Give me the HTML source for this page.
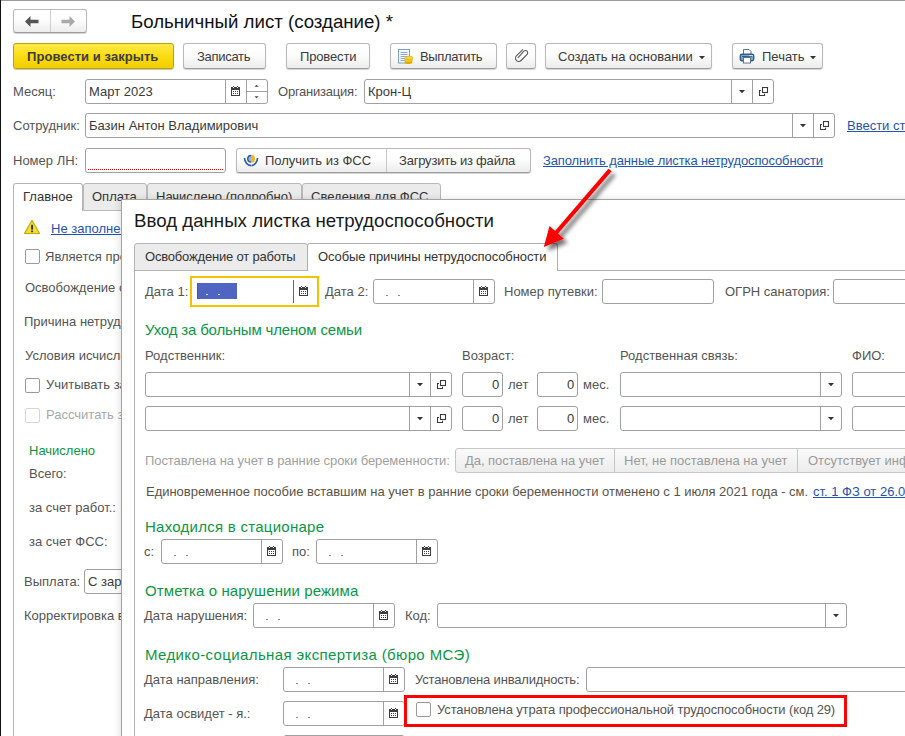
<!DOCTYPE html>
<html><head><meta charset="utf-8"><style>
html,body{margin:0;padding:0;width:905px;height:736px;overflow:hidden;background:#fff;}
body{position:relative;font-family:"Liberation Sans", sans-serif;}
.a{position:absolute;}
.t{position:absolute;white-space:nowrap;font-family:"Liberation Sans", sans-serif;}
</style></head><body>
<div class="a" style="left:0px;top:0px;width:905px;height:1px;background:#9a9a9a;"></div>
<div class="a" style="left:0px;top:0px;width:1px;height:736px;background:#111;"></div>
<div class="a" style="left:13px;top:9px;width:74px;height:24px;border:1px solid #b9b9b9;border-bottom-color:#9c9c9c;border-radius:3px;background:linear-gradient(#ffffff,#fdfdfd 45%,#ececec);box-shadow:0 1px 1px rgba(0,0,0,0.18);box-sizing:border-box;"></div>
<div class="a" style="left:50px;top:10px;width:1px;height:22px;background:#cfcfcf;"></div>
<svg class="a" style="left:24px;top:15px" width="16" height="13" viewBox="0 0 16 13"><path d="M1 6.5L6.5 1V4.8H14.5V8.2H6.5V12Z" fill="#555"/></svg>
<svg class="a" style="left:60px;top:15px" width="16" height="13" viewBox="0 0 16 13"><path d="M15 6.5L9.5 1V4.8H1.5V8.2H9.5V12Z" fill="#aaa"/></svg>
<div class="t" style="left:131px;top:11px;font-size:18.67px;line-height:21px;color:#111;">Больничный лист (создание) *</div>
<div class="a" style="left:13px;top:43px;width:161px;height:26px;border:1px solid #bca400;border-radius:3px;background:linear-gradient(#ffe94a,#fbdc12 50%,#f0cf00);box-shadow:0 1px 1px rgba(0,0,0,0.25);box-sizing:border-box;"></div>
<div class="t" style="left:27px;top:49px;font-size:13px;line-height:15px;color:#3c3c3c;font-weight:bold;letter-spacing:0.059px;">Провести и закрыть</div>
<div class="a" style="left:183px;top:43px;width:83px;height:26px;border:1px solid #b9b9b9;border-bottom-color:#9c9c9c;border-radius:3px;background:linear-gradient(#ffffff,#fdfdfd 45%,#ececec);box-shadow:0 1px 1px rgba(0,0,0,0.18);box-sizing:border-box;"></div>
<div class="t" style="left:197px;top:49px;font-size:13px;line-height:15px;color:#3a3a3a;letter-spacing:-0.286px;">Записать</div>
<div class="a" style="left:286px;top:43px;width:84px;height:26px;border:1px solid #b9b9b9;border-bottom-color:#9c9c9c;border-radius:3px;background:linear-gradient(#ffffff,#fdfdfd 45%,#ececec);box-shadow:0 1px 1px rgba(0,0,0,0.18);box-sizing:border-box;"></div>
<div class="t" style="left:300px;top:49px;font-size:13px;line-height:15px;color:#3a3a3a;letter-spacing:-0.143px;">Провести</div>
<div class="a" style="left:390px;top:43px;width:107px;height:26px;border:1px solid #b9b9b9;border-bottom-color:#9c9c9c;border-radius:3px;background:linear-gradient(#ffffff,#fdfdfd 45%,#ececec);box-shadow:0 1px 1px rgba(0,0,0,0.18);box-sizing:border-box;"></div>
<svg class="a" style="left:397px;top:48px" width="17" height="17" viewBox="0 0 17 17"><rect x="1.5" y="1.5" width="11" height="13.5" fill="#f4f8fc" stroke="#7f9fbf" stroke-width="1"/><path d="M3.5 4.5H10.5M3.5 6.5H10.5M3.5 8.5H10.5M3.5 10.5H8M3.5 12.5H8" stroke="#8fa8c0" stroke-width="1"/><ellipse cx="11.5" cy="14.2" rx="4" ry="1.8" fill="#e0b000"/><ellipse cx="11.5" cy="12.2" rx="4" ry="1.8" fill="#f3cc20" stroke="#d4a800" stroke-width="0.6"/><ellipse cx="12.2" cy="9.8" rx="3.8" ry="1.7" fill="#f7da40" stroke="#d4a800" stroke-width="0.6"/></svg>
<div class="t" style="left:420px;top:49px;font-size:13px;line-height:15px;color:#3a3a3a;letter-spacing:-0.375px;">Выплатить</div>
<div class="a" style="left:506px;top:43px;width:30px;height:26px;border:1px solid #b9b9b9;border-bottom-color:#9c9c9c;border-radius:3px;background:linear-gradient(#ffffff,#fdfdfd 45%,#ececec);box-shadow:0 1px 1px rgba(0,0,0,0.18);box-sizing:border-box;"></div>
<svg class="a" style="left:513px;top:47px" width="16" height="17" viewBox="0 0 16 17"><path d="M10 2.3L3.6 8.7C2.2 10.1 2.3 12.4 3.5 13.6C4.7 14.8 6.8 14.8 8.1 13.5L13.9 7.7C14.9 6.7 14.9 5.1 14 4.2C13.1 3.3 11.6 3.3 10.6 4.3L4.9 10.8" fill="none" stroke="#5a5a5a" stroke-width="1.15"/></svg>
<div class="a" style="left:545px;top:43px;width:167px;height:26px;border:1px solid #b9b9b9;border-bottom-color:#9c9c9c;border-radius:3px;background:linear-gradient(#ffffff,#fdfdfd 45%,#ececec);box-shadow:0 1px 1px rgba(0,0,0,0.18);box-sizing:border-box;"></div>
<div class="t" style="left:558px;top:49px;font-size:13px;line-height:15px;color:#3a3a3a;">Создать на основании</div>
<svg class="a" style="left:699px;top:56px" width="6" height="4" viewBox="0 0 6 4"><path d="M0 0H6L3 3.2Z" fill="#333"/></svg>
<div class="a" style="left:732px;top:43px;width:91px;height:26px;border:1px solid #b9b9b9;border-bottom-color:#9c9c9c;border-radius:3px;background:linear-gradient(#ffffff,#fdfdfd 45%,#ececec);box-shadow:0 1px 1px rgba(0,0,0,0.18);box-sizing:border-box;"></div>
<svg class="a" style="left:739px;top:48px" width="16" height="16" viewBox="0 0 16 16"><path d="M4.5 1.5H10L12 3.5V6.5H4.5Z" fill="#fff" stroke="#5a7390" stroke-width="1"/><rect x="1.3" y="6.3" width="13.4" height="6.4" rx="1.6" fill="#7ea3cc" stroke="#2f5f92" stroke-width="1.4"/><path d="M3 8.5H13" stroke="#3a5a80" stroke-width="1"/><rect x="4.5" y="9.5" width="7" height="5.5" fill="#fff" stroke="#5a7390" stroke-width="1"/><rect x="10.5" y="7" width="1.2" height="1.2" fill="#fff"/><rect x="12.3" y="7" width="1.2" height="1.2" fill="#fff"/></svg>
<div class="t" style="left:762px;top:49px;font-size:13px;line-height:15px;color:#3a3a3a;">Печать</div>
<svg class="a" style="left:810px;top:56px" width="6" height="4" viewBox="0 0 6 4"><path d="M0 0H6L3 3.2Z" fill="#333"/></svg>
<div class="t" style="left:13px;top:84px;font-size:13px;line-height:15px;color:#545454;">Месяц:</div>
<div class="a" style="left:85px;top:79px;width:183px;height:25px;border:1px solid #a0a0a0;border-radius:3px;background:#fff;box-sizing:border-box;"></div>
<div class="a" style="left:225px;top:80px;width:1px;height:23px;background:#a0a0a0;"></div>
<div class="a" style="left:246px;top:80px;width:1px;height:23px;background:#a0a0a0;"></div>
<div class="a" style="left:247px;top:91px;width:20px;height:1px;background:#a5a5a5;"></div>
<svg class="a" style="left:254px;top:84px" width="6" height="4" viewBox="0 0 6 4"><path d="M0.5 2.8H4.5L2.5 0.8Z" fill="#444"/></svg>
<svg class="a" style="left:254px;top:96px" width="6" height="4" viewBox="0 0 6 4"><path d="M0.5 0.2H4.5L2.5 2.2Z" fill="#444"/></svg>
<svg class="a" style="left:231px;top:86px" width="9" height="10" viewBox="0 0 9 10" shape-rendering="crispEdges"><rect x="0" y="1" width="9" height="9" rx="1" fill="#3d3d3d"/><rect x="1" y="4" width="7" height="5" fill="#fff"/><rect x="2" y="0" width="1" height="1" fill="#3d3d3d"/><rect x="6" y="0" width="1" height="1" fill="#3d3d3d"/><rect x="2" y="1" width="1" height="1" fill="#fff"/><rect x="6" y="1" width="1" height="1" fill="#fff"/><rect x="2" y="5" width="1" height="1" fill="#3d3d3d"/><rect x="4" y="5" width="1" height="1" fill="#3d3d3d"/><rect x="6" y="5" width="1" height="1" fill="#3d3d3d"/><rect x="2" y="7" width="1" height="1" fill="#3d3d3d"/><rect x="4" y="7" width="1" height="1" fill="#3d3d3d"/><rect x="6" y="7" width="1" height="1" fill="#3d3d3d"/></svg>
<div class="t" style="left:89px;top:84px;font-size:13px;line-height:15px;color:#3a3a3a;">Март 2023</div>
<div class="t" style="left:278px;top:84px;font-size:13px;line-height:15px;color:#545454;letter-spacing:-0.227px;">Организация:</div>
<div class="a" style="left:364px;top:79px;width:410px;height:25px;border:1px solid #a0a0a0;border-radius:3px;background:#fff;box-sizing:border-box;"></div>
<div class="a" style="left:731px;top:80px;width:1px;height:23px;background:#a0a0a0;"></div>
<div class="a" style="left:752px;top:80px;width:1px;height:23px;background:#a0a0a0;"></div>
<svg class="a" style="left:739px;top:90px" width="6" height="4" viewBox="0 0 6 4"><path d="M0 0H6L3 3.2Z" fill="#333"/></svg>
<svg class="a" style="left:759px;top:87px" width="10" height="10" viewBox="0 0 10 10"><rect x="3.5" y="0.5" width="5" height="5" fill="none" stroke="#3a3a3a" stroke-width="1.1"/><path d="M2 3.5H0.5V8.5H5.5V6.8" fill="none" stroke="#3a3a3a" stroke-width="1.1"/></svg>
<div class="t" style="left:368px;top:84px;font-size:13px;line-height:15px;color:#3a3a3a;">Крон-Ц</div>
<div class="t" style="left:13px;top:118px;font-size:13px;line-height:15px;color:#545454;">Сотрудник:</div>
<div class="a" style="left:85px;top:113px;width:750px;height:25px;border:1px solid #a0a0a0;border-radius:3px;background:#fff;box-sizing:border-box;"></div>
<div class="a" style="left:792px;top:114px;width:1px;height:23px;background:#a0a0a0;"></div>
<div class="a" style="left:813px;top:114px;width:1px;height:23px;background:#a0a0a0;"></div>
<svg class="a" style="left:800px;top:124px" width="6" height="4" viewBox="0 0 6 4"><path d="M0 0H6L3 3.2Z" fill="#333"/></svg>
<svg class="a" style="left:820px;top:121px" width="10" height="10" viewBox="0 0 10 10"><rect x="3.5" y="0.5" width="5" height="5" fill="none" stroke="#3a3a3a" stroke-width="1.1"/><path d="M2 3.5H0.5V8.5H5.5V6.8" fill="none" stroke="#3a3a3a" stroke-width="1.1"/></svg>
<div class="t" style="left:89px;top:118px;font-size:13px;line-height:15px;color:#3a3a3a;">Базин Антон Владимирович</div>
<div class="t" style="left:847px;top:118px;font-size:13px;line-height:15px;color:#1f54b0;text-decoration:underline;">Ввести старые данные</div>
<div class="t" style="left:13px;top:153px;font-size:13px;line-height:15px;color:#545454;">Номер ЛН:</div>
<div class="a" style="left:85px;top:148px;width:141px;height:25px;border:1px solid #a0a0a0;border-radius:3px;background:#fff;box-sizing:border-box;"></div>
<div class="a" style="left:88px;top:169px;width:135px;height:0;border-top:1px dotted #e00000"></div>
<div class="a" style="left:236px;top:148px;width:295px;height:25px;border:1px solid #b9b9b9;border-bottom-color:#9c9c9c;border-radius:3px;background:linear-gradient(#ffffff,#fdfdfd 45%,#ececec);box-shadow:0 1px 1px rgba(0,0,0,0.18);box-sizing:border-box;"></div>
<div class="a" style="left:386px;top:149px;width:1px;height:23px;background:#c8c8c8;"></div>
<svg class="a" style="left:243px;top:153px" width="16" height="14" viewBox="0 0 16 14"><path d="M1.5 5C1.5 9 4.5 12.3 8 12.6" fill="none" stroke="#2a5aa8" stroke-width="1.6"/><path d="M14.5 5C14.5 9 11.5 12.3 8.5 12.6" fill="none" stroke="#2a5aa8" stroke-width="1.6"/><path d="M8 1.8A4 4 0 0 0 8 9.8Z" fill="#2a5aa8"/><path d="M8 1.8A4 4 0 0 1 8 9.8Z" fill="#f6b31a"/><path d="M8 3.2A2.5 2.6 0 0 0 8 8.4Z" fill="#9ab8e0"/></svg>
<div class="t" style="left:265px;top:153px;font-size:13px;line-height:15px;color:#3a3a3a;letter-spacing:-0.007px;">Получить из ФСС</div>
<div class="t" style="left:399px;top:153px;font-size:13px;line-height:15px;color:#3a3a3a;letter-spacing:-0.206px;">Загрузить из файла</div>
<div class="t" style="left:543px;top:153px;font-size:13px;line-height:15px;color:#1f54b0;letter-spacing:-0.122px;text-decoration:underline;">Заполнить данные листка нетрудоспособности</div>
<div class="a" style="left:13px;top:183px;width:70px;height:28px;border:1px solid #b5b5b5;border-bottom:none;border-radius:3px 3px 0 0;background:#fff;box-sizing:border-box;"></div>
<div class="a" style="left:83px;top:183px;width:64px;height:28px;border:1px solid #b9b9b9;border-radius:3px 3px 0 0;background:#ebebeb;box-sizing:border-box;"></div>
<div class="a" style="left:147px;top:183px;width:155px;height:28px;border:1px solid #b9b9b9;border-radius:3px 3px 0 0;background:#ebebeb;box-sizing:border-box;"></div>
<div class="a" style="left:302px;top:183px;width:139px;height:28px;border:1px solid #b9b9b9;border-radius:3px 3px 0 0;background:#ebebeb;box-sizing:border-box;"></div>
<div class="a" style="left:441px;top:210px;width:464px;height:1px;background:#b5b5b5;"></div>
<div class="a" style="left:13px;top:210px;width:1px;height:526px;background:#b5b5b5;"></div>
<div class="t" style="left:23px;top:189px;font-size:13px;line-height:15px;color:#333;">Главное</div>
<div class="t" style="left:92px;top:189px;font-size:13px;line-height:15px;color:#333;">Оплата</div>
<div class="t" style="left:156px;top:189px;font-size:13px;line-height:15px;color:#333;">Начислено (подробно)</div>
<div class="t" style="left:311px;top:189px;font-size:13px;line-height:15px;color:#333;">Сведения для ФСС</div>
<svg class="a" style="left:23px;top:219px" width="18" height="16" viewBox="0 0 18 16"><path d="M9 1.3L16.6 14.5H1.4Z" fill="#f3dc3a" stroke="#c8a800" stroke-width="1.1" stroke-linejoin="round"/><rect x="8.2" y="5.8" width="1.7" height="4.8" fill="#222"/><rect x="8.2" y="11.6" width="1.7" height="1.6" fill="#222"/></svg>
<div class="t" style="left:51px;top:221px;font-size:13px;line-height:15px;color:#1f54b0;text-decoration:underline;">Не заполнены данные о стаже</div>
<div class="a" style="left:25px;top:249px;width:15px;height:15px;border:1px solid #9a9a9a;border-radius:2px;background:#fff;box-sizing:border-box;"></div>
<div class="t" style="left:45px;top:249px;font-size:13px;line-height:15px;color:#545454;">Является продолжением</div>
<div class="t" style="left:25px;top:280px;font-size:13px;line-height:15px;color:#545454;">Освобождение от работы</div>
<div class="t" style="left:24px;top:314px;font-size:13px;line-height:15px;color:#545454;">Причина нетрудоспособности</div>
<div class="t" style="left:25px;top:348px;font-size:13px;line-height:15px;color:#545454;">Условия исчисления</div>
<div class="a" style="left:25px;top:378px;width:15px;height:15px;border:1px solid #9a9a9a;border-radius:2px;background:#fff;box-sizing:border-box;"></div>
<div class="t" style="left:46px;top:377px;font-size:13px;line-height:15px;color:#545454;">Учитывать заработок</div>
<div class="a" style="left:25px;top:408px;width:15px;height:15px;border:1px solid #d6d6d6;border-radius:2px;background:#fff;box-sizing:border-box;"></div>
<div class="t" style="left:46px;top:407px;font-size:13px;line-height:15px;color:#a8a8a8;">Рассчитать за</div>
<div class="t" style="left:29px;top:443px;font-size:13px;line-height:15px;color:#0b9646;">Начислено</div>
<div class="t" style="left:29px;top:466px;font-size:13px;line-height:15px;color:#545454;">Всего:</div>
<div class="t" style="left:29px;top:500px;font-size:13px;line-height:15px;color:#545454;">за счет работ.:</div>
<div class="t" style="left:29px;top:534px;font-size:13px;line-height:15px;color:#545454;">за счет ФСС:</div>
<div class="t" style="left:24px;top:574px;font-size:13px;line-height:15px;color:#545454;">Выплата:</div>
<div class="a" style="left:84px;top:569px;width:317px;height:25px;border:1px solid #a0a0a0;border-radius:3px;background:#fff;box-sizing:border-box;"></div>
<div class="t" style="left:88px;top:574px;font-size:13px;line-height:15px;color:#3a3a3a;">С зарплатой</div>
<div class="t" style="left:24px;top:608px;font-size:13px;line-height:15px;color:#545454;">Корректировка выплаты</div>
<div class="a" style="left:121px;top:199px;width:800px;height:600px;background:#fff;border:1px solid #a2a2a2;box-sizing:border-box;box-shadow:-1px 0 7px rgba(0,0,0,0.13);"></div>
<div class="t" style="left:134px;top:210px;font-size:18.67px;line-height:21px;color:#1a1a1a;letter-spacing:0.014px;">Ввод данных листка нетрудоспособности</div>
<div class="a" style="left:134px;top:243px;width:174px;height:28px;border:1px solid #b5b5b5;border-radius:3px 3px 0 0;background:#ebebeb;box-sizing:border-box;"></div>
<div class="a" style="left:307px;top:243px;width:251px;height:28px;border:1px solid #b0b0b0;border-bottom:none;border-radius:3px 3px 0 0;background:#fff;box-sizing:border-box;"></div>
<div class="a" style="left:558px;top:270px;width:347px;height:1px;background:#b0b0b0;"></div>
<div class="a" style="left:134px;top:270px;width:1px;height:466px;background:#b0b0b0;"></div>
<div class="t" style="left:145px;top:249px;font-size:13px;line-height:15px;color:#333;letter-spacing:-0.186px;">Освобождение от работы</div>
<div class="t" style="left:318px;top:249px;font-size:13px;line-height:15px;color:#333;letter-spacing:-0.094px;">Особые причины нетрудоспособности</div>
<div class="t" style="left:145px;top:284px;font-size:13px;line-height:15px;color:#545454;">Дата 1:</div>
<div class="a" style="left:190px;top:276px;width:129px;height:31px;border:2px solid #f5c200;box-sizing:border-box;background:#fff;"></div>
<div class="a" style="left:197px;top:283px;width:40px;height:16px;background:#5065c2;"></div>
<div class="a" style="left:197px;top:283px;width:1px;height:16px;background:#6a5a20;"></div>
<div class="a" style="left:206px;top:294px;width:2px;height:1px;background:#dfe4ff"></div>
<div class="a" style="left:218px;top:294px;width:2px;height:1px;background:#dfe4ff"></div>
<div class="a" style="left:293px;top:280px;width:1px;height:23px;background:#666;"></div>
<svg class="a" style="left:299px;top:286px" width="9" height="10" viewBox="0 0 9 10" shape-rendering="crispEdges"><rect x="0" y="1" width="9" height="9" rx="1" fill="#3d3d3d"/><rect x="1" y="4" width="7" height="5" fill="#fff"/><rect x="2" y="0" width="1" height="1" fill="#3d3d3d"/><rect x="6" y="0" width="1" height="1" fill="#3d3d3d"/><rect x="2" y="1" width="1" height="1" fill="#fff"/><rect x="6" y="1" width="1" height="1" fill="#fff"/><rect x="2" y="5" width="1" height="1" fill="#3d3d3d"/><rect x="4" y="5" width="1" height="1" fill="#3d3d3d"/><rect x="6" y="5" width="1" height="1" fill="#3d3d3d"/><rect x="2" y="7" width="1" height="1" fill="#3d3d3d"/><rect x="4" y="7" width="1" height="1" fill="#3d3d3d"/><rect x="6" y="7" width="1" height="1" fill="#3d3d3d"/></svg>
<div class="t" style="left:325px;top:284px;font-size:13px;line-height:15px;color:#545454;">Дата 2:</div>
<div class="a" style="left:373px;top:279px;width:122px;height:25px;border:1px solid #a0a0a0;border-radius:3px;background:#fff;box-sizing:border-box;"></div>
<div class="a" style="left:473px;top:280px;width:1px;height:23px;background:#a0a0a0;"></div>
<svg class="a" style="left:479px;top:286px" width="9" height="10" viewBox="0 0 9 10" shape-rendering="crispEdges"><rect x="0" y="1" width="9" height="9" rx="1" fill="#3d3d3d"/><rect x="1" y="4" width="7" height="5" fill="#fff"/><rect x="2" y="0" width="1" height="1" fill="#3d3d3d"/><rect x="6" y="0" width="1" height="1" fill="#3d3d3d"/><rect x="2" y="1" width="1" height="1" fill="#fff"/><rect x="6" y="1" width="1" height="1" fill="#fff"/><rect x="2" y="5" width="1" height="1" fill="#3d3d3d"/><rect x="4" y="5" width="1" height="1" fill="#3d3d3d"/><rect x="6" y="5" width="1" height="1" fill="#3d3d3d"/><rect x="2" y="7" width="1" height="1" fill="#3d3d3d"/><rect x="4" y="7" width="1" height="1" fill="#3d3d3d"/><rect x="6" y="7" width="1" height="1" fill="#3d3d3d"/></svg>
<div class="a" style="left:386px;top:295px;width:2px;height:1px;background:#8c8c8c"></div>
<div class="a" style="left:398px;top:295px;width:2px;height:1px;background:#8c8c8c"></div>
<div class="t" style="left:504px;top:284px;font-size:13px;line-height:15px;color:#545454;">Номер путевки:</div>
<div class="a" style="left:602px;top:279px;width:112px;height:25px;border:1px solid #a0a0a0;border-radius:3px;background:#fff;box-sizing:border-box;"></div>
<div class="t" style="left:725px;top:284px;font-size:13px;line-height:15px;color:#545454;">ОГРН санатория:</div>
<div class="a" style="left:833px;top:279px;width:128px;height:25px;border:1px solid #a0a0a0;border-radius:3px;background:#fff;box-sizing:border-box;"></div>
<div class="t" style="left:145px;top:321px;font-size:15px;line-height:17px;color:#0b9646;letter-spacing:-0.167px;">Уход за больным членом семьи</div>
<div class="t" style="left:145px;top:348px;font-size:13px;line-height:15px;color:#545454;">Родственник:</div>
<div class="t" style="left:462px;top:348px;font-size:13px;line-height:15px;color:#545454;">Возраст:</div>
<div class="t" style="left:620px;top:348px;font-size:13px;line-height:15px;color:#545454;">Родственная связь:</div>
<div class="t" style="left:852px;top:348px;font-size:13px;line-height:15px;color:#545454;">ФИО:</div>
<div class="a" style="left:145px;top:372px;width:307px;height:25px;border:1px solid #a0a0a0;border-radius:3px;background:#fff;box-sizing:border-box;"></div>
<div class="a" style="left:409px;top:373px;width:1px;height:23px;background:#a0a0a0;"></div>
<div class="a" style="left:430px;top:373px;width:1px;height:23px;background:#a0a0a0;"></div>
<svg class="a" style="left:417px;top:383px" width="6" height="4" viewBox="0 0 6 4"><path d="M0 0H6L3 3.2Z" fill="#333"/></svg>
<svg class="a" style="left:437px;top:380px" width="10" height="10" viewBox="0 0 10 10"><rect x="3.5" y="0.5" width="5" height="5" fill="none" stroke="#3a3a3a" stroke-width="1.1"/><path d="M2 3.5H0.5V8.5H5.5V6.8" fill="none" stroke="#3a3a3a" stroke-width="1.1"/></svg>
<div class="a" style="left:462px;top:372px;width:41px;height:25px;border:1px solid #a0a0a0;border-radius:3px;background:#fff;box-sizing:border-box;"></div>
<div class="t" style="left:492px;top:377px;font-size:13px;line-height:15px;color:#3a3a3a;">0</div>
<div class="t" style="left:508px;top:377px;font-size:13px;line-height:15px;color:#545454;">лет</div>
<div class="a" style="left:537px;top:372px;width:41px;height:25px;border:1px solid #a0a0a0;border-radius:3px;background:#fff;box-sizing:border-box;"></div>
<div class="t" style="left:567px;top:377px;font-size:13px;line-height:15px;color:#3a3a3a;">0</div>
<div class="t" style="left:583px;top:377px;font-size:13px;line-height:15px;color:#545454;">мес.</div>
<div class="a" style="left:620px;top:372px;width:222px;height:25px;border:1px solid #a0a0a0;border-radius:3px;background:#fff;box-sizing:border-box;"></div>
<div class="a" style="left:820px;top:373px;width:1px;height:23px;background:#a0a0a0;"></div>
<svg class="a" style="left:828px;top:383px" width="6" height="4" viewBox="0 0 6 4"><path d="M0 0H6L3 3.2Z" fill="#333"/></svg>
<div class="a" style="left:852px;top:372px;width:109px;height:25px;border:1px solid #a0a0a0;border-radius:3px;background:#fff;box-sizing:border-box;"></div>
<div class="a" style="left:145px;top:406px;width:307px;height:25px;border:1px solid #a0a0a0;border-radius:3px;background:#fff;box-sizing:border-box;"></div>
<div class="a" style="left:409px;top:407px;width:1px;height:23px;background:#a0a0a0;"></div>
<div class="a" style="left:430px;top:407px;width:1px;height:23px;background:#a0a0a0;"></div>
<svg class="a" style="left:417px;top:417px" width="6" height="4" viewBox="0 0 6 4"><path d="M0 0H6L3 3.2Z" fill="#333"/></svg>
<svg class="a" style="left:437px;top:414px" width="10" height="10" viewBox="0 0 10 10"><rect x="3.5" y="0.5" width="5" height="5" fill="none" stroke="#3a3a3a" stroke-width="1.1"/><path d="M2 3.5H0.5V8.5H5.5V6.8" fill="none" stroke="#3a3a3a" stroke-width="1.1"/></svg>
<div class="a" style="left:462px;top:406px;width:41px;height:25px;border:1px solid #a0a0a0;border-radius:3px;background:#fff;box-sizing:border-box;"></div>
<div class="t" style="left:492px;top:411px;font-size:13px;line-height:15px;color:#3a3a3a;">0</div>
<div class="t" style="left:508px;top:411px;font-size:13px;line-height:15px;color:#545454;">лет</div>
<div class="a" style="left:537px;top:406px;width:41px;height:25px;border:1px solid #a0a0a0;border-radius:3px;background:#fff;box-sizing:border-box;"></div>
<div class="t" style="left:567px;top:411px;font-size:13px;line-height:15px;color:#3a3a3a;">0</div>
<div class="t" style="left:583px;top:411px;font-size:13px;line-height:15px;color:#545454;">мес.</div>
<div class="a" style="left:620px;top:406px;width:222px;height:25px;border:1px solid #a0a0a0;border-radius:3px;background:#fff;box-sizing:border-box;"></div>
<div class="a" style="left:820px;top:407px;width:1px;height:23px;background:#a0a0a0;"></div>
<svg class="a" style="left:828px;top:417px" width="6" height="4" viewBox="0 0 6 4"><path d="M0 0H6L3 3.2Z" fill="#333"/></svg>
<div class="a" style="left:852px;top:406px;width:109px;height:25px;border:1px solid #a0a0a0;border-radius:3px;background:#fff;box-sizing:border-box;"></div>
<div class="t" style="left:145px;top:453px;font-size:13px;line-height:15px;color:#a0a0a0;letter-spacing:-0.074px;">Поставлена на учет в ранние сроки беременности:</div>
<div class="a" style="left:455px;top:448px;width:506px;height:25px;border:1px solid #c6c6c6;border-radius:3px;background:linear-gradient(#fafafa,#ececec);box-sizing:border-box;"></div>
<div class="a" style="left:614px;top:449px;width:1px;height:23px;background:#c6c6c6;"></div>
<div class="a" style="left:797px;top:449px;width:1px;height:23px;background:#c6c6c6;"></div>
<div class="t" style="left:465px;top:453px;font-size:13px;line-height:15px;color:#9a9a9a;letter-spacing:-0.043px;">Да, поставлена на учет</div>
<div class="t" style="left:624px;top:453px;font-size:13px;line-height:15px;color:#9a9a9a;letter-spacing:0.008px;">Нет, не поставлена на учет</div>
<div class="t" style="left:808px;top:453px;font-size:13px;line-height:15px;color:#9a9a9a;">Отсутствует информация</div>
<div class="t" style="left:146px;top:484px;font-size:13px;line-height:15px;color:#59544a;letter-spacing:-0.024px;">Единовременное пособие вставшим на учет в ранние сроки беременности отменено с 1 июля 2021 года - см.</div>
<div class="t" style="left:813px;top:484px;font-size:13px;line-height:15px;color:#1f54b0;text-decoration:underline;">ст. 1 ФЗ от 26.05.2021</div>
<div class="t" style="left:145px;top:518px;font-size:15px;line-height:17px;color:#0b9646;letter-spacing:0.262px;">Находился в стационаре</div>
<div class="t" style="left:144px;top:544px;font-size:13px;line-height:15px;color:#545454;">с:</div>
<div class="a" style="left:161px;top:539px;width:122px;height:25px;border:1px solid #a0a0a0;border-radius:3px;background:#fff;box-sizing:border-box;"></div>
<div class="a" style="left:261px;top:540px;width:1px;height:23px;background:#a0a0a0;"></div>
<svg class="a" style="left:267px;top:546px" width="9" height="10" viewBox="0 0 9 10" shape-rendering="crispEdges"><rect x="0" y="1" width="9" height="9" rx="1" fill="#3d3d3d"/><rect x="1" y="4" width="7" height="5" fill="#fff"/><rect x="2" y="0" width="1" height="1" fill="#3d3d3d"/><rect x="6" y="0" width="1" height="1" fill="#3d3d3d"/><rect x="2" y="1" width="1" height="1" fill="#fff"/><rect x="6" y="1" width="1" height="1" fill="#fff"/><rect x="2" y="5" width="1" height="1" fill="#3d3d3d"/><rect x="4" y="5" width="1" height="1" fill="#3d3d3d"/><rect x="6" y="5" width="1" height="1" fill="#3d3d3d"/><rect x="2" y="7" width="1" height="1" fill="#3d3d3d"/><rect x="4" y="7" width="1" height="1" fill="#3d3d3d"/><rect x="6" y="7" width="1" height="1" fill="#3d3d3d"/></svg>
<div class="a" style="left:174px;top:555px;width:2px;height:1px;background:#8c8c8c"></div>
<div class="a" style="left:186px;top:555px;width:2px;height:1px;background:#8c8c8c"></div>
<div class="t" style="left:292px;top:544px;font-size:13px;line-height:15px;color:#545454;">по:</div>
<div class="a" style="left:316px;top:539px;width:122px;height:25px;border:1px solid #a0a0a0;border-radius:3px;background:#fff;box-sizing:border-box;"></div>
<div class="a" style="left:416px;top:540px;width:1px;height:23px;background:#a0a0a0;"></div>
<svg class="a" style="left:422px;top:546px" width="9" height="10" viewBox="0 0 9 10" shape-rendering="crispEdges"><rect x="0" y="1" width="9" height="9" rx="1" fill="#3d3d3d"/><rect x="1" y="4" width="7" height="5" fill="#fff"/><rect x="2" y="0" width="1" height="1" fill="#3d3d3d"/><rect x="6" y="0" width="1" height="1" fill="#3d3d3d"/><rect x="2" y="1" width="1" height="1" fill="#fff"/><rect x="6" y="1" width="1" height="1" fill="#fff"/><rect x="2" y="5" width="1" height="1" fill="#3d3d3d"/><rect x="4" y="5" width="1" height="1" fill="#3d3d3d"/><rect x="6" y="5" width="1" height="1" fill="#3d3d3d"/><rect x="2" y="7" width="1" height="1" fill="#3d3d3d"/><rect x="4" y="7" width="1" height="1" fill="#3d3d3d"/><rect x="6" y="7" width="1" height="1" fill="#3d3d3d"/></svg>
<div class="a" style="left:329px;top:555px;width:2px;height:1px;background:#8c8c8c"></div>
<div class="a" style="left:341px;top:555px;width:2px;height:1px;background:#8c8c8c"></div>
<div class="t" style="left:145px;top:582px;font-size:15px;line-height:17px;color:#0b9646;letter-spacing:0.096px;">Отметка о нарушении режима</div>
<div class="t" style="left:144px;top:608px;font-size:13px;line-height:15px;color:#545454;">Дата нарушения:</div>
<div class="a" style="left:253px;top:603px;width:142px;height:25px;border:1px solid #a0a0a0;border-radius:3px;background:#fff;box-sizing:border-box;"></div>
<div class="a" style="left:373px;top:604px;width:1px;height:23px;background:#a0a0a0;"></div>
<svg class="a" style="left:379px;top:610px" width="9" height="10" viewBox="0 0 9 10" shape-rendering="crispEdges"><rect x="0" y="1" width="9" height="9" rx="1" fill="#3d3d3d"/><rect x="1" y="4" width="7" height="5" fill="#fff"/><rect x="2" y="0" width="1" height="1" fill="#3d3d3d"/><rect x="6" y="0" width="1" height="1" fill="#3d3d3d"/><rect x="2" y="1" width="1" height="1" fill="#fff"/><rect x="6" y="1" width="1" height="1" fill="#fff"/><rect x="2" y="5" width="1" height="1" fill="#3d3d3d"/><rect x="4" y="5" width="1" height="1" fill="#3d3d3d"/><rect x="6" y="5" width="1" height="1" fill="#3d3d3d"/><rect x="2" y="7" width="1" height="1" fill="#3d3d3d"/><rect x="4" y="7" width="1" height="1" fill="#3d3d3d"/><rect x="6" y="7" width="1" height="1" fill="#3d3d3d"/></svg>
<div class="a" style="left:266px;top:619px;width:2px;height:1px;background:#8c8c8c"></div>
<div class="a" style="left:278px;top:619px;width:2px;height:1px;background:#8c8c8c"></div>
<div class="t" style="left:405px;top:608px;font-size:13px;line-height:15px;color:#545454;">Код:</div>
<div class="a" style="left:437px;top:603px;width:410px;height:25px;border:1px solid #a0a0a0;border-radius:3px;background:#fff;box-sizing:border-box;"></div>
<div class="a" style="left:825px;top:604px;width:1px;height:23px;background:#a0a0a0;"></div>
<svg class="a" style="left:833px;top:614px" width="6" height="4" viewBox="0 0 6 4"><path d="M0 0H6L3 3.2Z" fill="#333"/></svg>
<div class="t" style="left:145px;top:646px;font-size:15px;line-height:17px;color:#0b9646;letter-spacing:0.379px;">Медико-социальная экспертиза (бюро МСЭ)</div>
<div class="t" style="left:144px;top:672px;font-size:13px;line-height:15px;color:#545454;">Дата направления:</div>
<div class="a" style="left:283px;top:667px;width:122px;height:25px;border:1px solid #a0a0a0;border-radius:3px;background:#fff;box-sizing:border-box;"></div>
<div class="a" style="left:383px;top:668px;width:1px;height:23px;background:#a0a0a0;"></div>
<svg class="a" style="left:389px;top:674px" width="9" height="10" viewBox="0 0 9 10" shape-rendering="crispEdges"><rect x="0" y="1" width="9" height="9" rx="1" fill="#3d3d3d"/><rect x="1" y="4" width="7" height="5" fill="#fff"/><rect x="2" y="0" width="1" height="1" fill="#3d3d3d"/><rect x="6" y="0" width="1" height="1" fill="#3d3d3d"/><rect x="2" y="1" width="1" height="1" fill="#fff"/><rect x="6" y="1" width="1" height="1" fill="#fff"/><rect x="2" y="5" width="1" height="1" fill="#3d3d3d"/><rect x="4" y="5" width="1" height="1" fill="#3d3d3d"/><rect x="6" y="5" width="1" height="1" fill="#3d3d3d"/><rect x="2" y="7" width="1" height="1" fill="#3d3d3d"/><rect x="4" y="7" width="1" height="1" fill="#3d3d3d"/><rect x="6" y="7" width="1" height="1" fill="#3d3d3d"/></svg>
<div class="a" style="left:296px;top:683px;width:2px;height:1px;background:#8c8c8c"></div>
<div class="a" style="left:308px;top:683px;width:2px;height:1px;background:#8c8c8c"></div>
<div class="t" style="left:415px;top:672px;font-size:13px;line-height:15px;color:#545454;letter-spacing:-0.183px;">Установлена инвалидность:</div>
<div class="a" style="left:586px;top:667px;width:375px;height:25px;border:1px solid #a0a0a0;border-radius:3px;background:#fff;box-sizing:border-box;"></div>
<div class="t" style="left:144px;top:706px;font-size:13px;line-height:15px;color:#545454;">Дата освидет - я.:</div>
<div class="a" style="left:283px;top:701px;width:122px;height:25px;border:1px solid #a0a0a0;border-radius:3px;background:#fff;box-sizing:border-box;"></div>
<div class="a" style="left:383px;top:702px;width:1px;height:23px;background:#a0a0a0;"></div>
<svg class="a" style="left:389px;top:708px" width="9" height="10" viewBox="0 0 9 10" shape-rendering="crispEdges"><rect x="0" y="1" width="9" height="9" rx="1" fill="#3d3d3d"/><rect x="1" y="4" width="7" height="5" fill="#fff"/><rect x="2" y="0" width="1" height="1" fill="#3d3d3d"/><rect x="6" y="0" width="1" height="1" fill="#3d3d3d"/><rect x="2" y="1" width="1" height="1" fill="#fff"/><rect x="6" y="1" width="1" height="1" fill="#fff"/><rect x="2" y="5" width="1" height="1" fill="#3d3d3d"/><rect x="4" y="5" width="1" height="1" fill="#3d3d3d"/><rect x="6" y="5" width="1" height="1" fill="#3d3d3d"/><rect x="2" y="7" width="1" height="1" fill="#3d3d3d"/><rect x="4" y="7" width="1" height="1" fill="#3d3d3d"/><rect x="6" y="7" width="1" height="1" fill="#3d3d3d"/></svg>
<div class="a" style="left:296px;top:717px;width:2px;height:1px;background:#8c8c8c"></div>
<div class="a" style="left:308px;top:717px;width:2px;height:1px;background:#8c8c8c"></div>
<div class="a" style="left:283px;top:735px;width:122px;height:26px;border:1px solid #a0a0a0;border-radius:3px;background:#fff;box-sizing:border-box;"></div>
<div class="a" style="left:404px;top:695px;width:443px;height:32px;border:3px solid #ff0000;box-sizing:border-box;"></div>
<div class="a" style="left:416px;top:702px;width:15px;height:15px;border:1px solid #9a9a9a;border-radius:2px;background:#fff;box-sizing:border-box;"></div>
<div class="t" style="left:437px;top:702px;font-size:13px;line-height:15px;color:#545454;letter-spacing:-0.128px;">Установлена утрата профессиональной трудоспособности (код 29)</div>
<svg class="a" style="left:0;top:0" width="905" height="736" viewBox="0 0 905 736"><defs><filter id="sh" x="-50%" y="-50%" width="200%" height="200%"><feDropShadow dx="4" dy="4" stdDeviation="2.2" flood-color="#000" flood-opacity="0.55"/></filter></defs><g filter="url(#sh)"><path d="M610 170L555.5 233.5" stroke="#ff0000" stroke-width="4.2" fill="none"/><path d="M543.8 247L549.5 226L563.8 238.8Z" fill="#ff0000"/></g></svg>
</body></html>
